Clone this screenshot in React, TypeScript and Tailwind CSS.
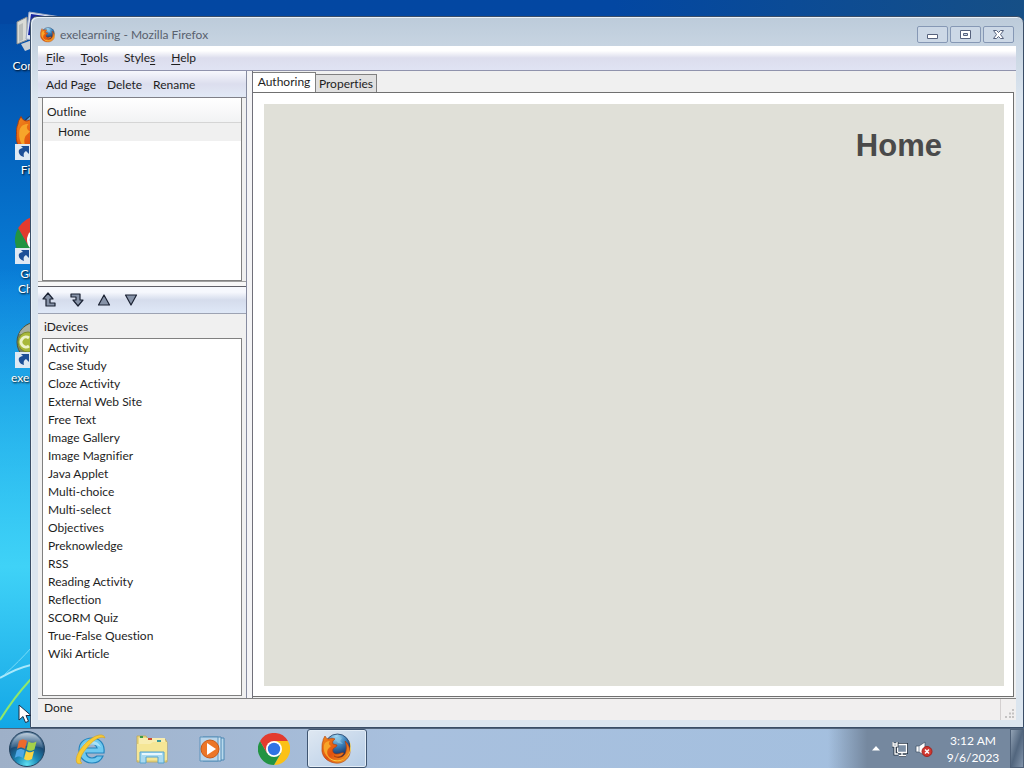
import * as React from 'react';

const MENUS = [
  { before: '', key: 'F', after: 'ile' },
  { before: '', key: 'T', after: 'ools' },
  { before: 'Style', key: 's', after: '' },
  { before: '', key: 'H', after: 'elp' },
];

const PAGE_ACTIONS = ['Add Page', 'Delete', 'Rename'];

const IDEVICES = [
  'Activity',
  'Case Study',
  'Cloze Activity',
  'External Web Site',
  'Free Text',
  'Image Gallery',
  'Image Magnifier',
  'Java Applet',
  'Multi-choice',
  'Multi-select',
  'Objectives',
  'Preknowledge',
  'RSS',
  'Reading Activity',
  'Reflection',
  'SCORM Quiz',
  'True-False Question',
  'Wiki Article',
];

interface IconProps {
  className?: string;
}

function FirefoxIcon({ className }: IconProps) {
  const id = React.useId();
  return (
    <svg viewBox="0 0 32 32" className={className} aria-hidden="true">
      <defs>
        <radialGradient id={`${id}globe`} cx="0.45" cy="0.1" r="0.9">
          <stop offset="0" stopColor="#a4daf4" />
          <stop offset="0.45" stopColor="#3a7fb9" />
          <stop offset="1" stopColor="#0a1444" />
        </radialGradient>
        <linearGradient id={`${id}fox`} x1="0" y1="0" x2="1" y2="1">
          <stop offset="0" stopColor="#f08a1c" />
          <stop offset="0.5" stopColor="#e2510f" />
          <stop offset="1" stopColor="#f6b02c" />
        </linearGradient>
      </defs>
      <circle cx="16.500" cy="13.500" r="12.500" fill={`url(#${id}globe)`} stroke="#1f3c66" strokeWidth="0.8" />
      <path d="M13 3c2 2 5 0 8 2l-2 3 3 3-5-1-3-4z" fill="#8cc6e6" opacity="0.7" />
      <path
        d="M2 8c0-2 1-3 2-5 1 2 2 3 4 3 2-1 4-1 6 0-2 1-3 3-2 5l4 1c0 2-2 2-4 4-1 3 1 5 4 5 3 0 4-2 7-1-2 4-7 5-10 3 5 3 11 1 12-5 1-4 0-7-1-10 5 4 6 11 4 15-3 5-8 8-14 7C6 29 0 23 1 15c0-3 0-5 1-7z"
        fill={`url(#${id}fox)`}
        stroke="#a93a0b"
        strokeWidth="0.6"
      />
      <path d="M28 7c4 8 2 15-5 19-7 3-14 1-18-5 4 8 12 9 18 5s8-11 5-19z" fill="#fbd449" />
      <path d="M3 12c1-3 3-4 6-4-2 2-1 4 1 5l-3 3c-2 4 0 7 2 9-5-2-7-7-6-13z" fill="#f7a52a" />
    </svg>
  );
}

function ChromeIcon({ className }: IconProps) {
  return (
    <svg viewBox="0 0 32 32" className={className} aria-hidden="true">
      <path d="M16 8h13.900A16 16 0 0 1 16 32l7-12z" fill="#fbc116" />
      <path d="M2.100 8L9 20l14 0-7 12A16 16 0 0 1 2.100 8z" fill="#229342" />
      <path d="M2.100 8A16 16 0 0 1 29.900 8H16L9 20z" fill="#e33b2e" />
      <circle cx="16" cy="16" r="8" fill="#fff" />
      <circle cx="16" cy="16" r="6.200" fill="#2f73e4" />
    </svg>
  );
}

function StartOrb() {
  return (
    <svg viewBox="0 0 38 38" className="size-[38px]" aria-hidden="true">
      <defs>
        <radialGradient id="orb" cx="0.5" cy="0.95" r="0.9">
          <stop offset="0" stopColor="#5fe0f2" />
          <stop offset="0.35" stopColor="#1c8bb8" />
          <stop offset="0.7" stopColor="#1b4a74" />
          <stop offset="1" stopColor="#5d7f9f" />
        </radialGradient>
        <linearGradient id="orbGloss" x1="0" y1="0" x2="0" y2="1">
          <stop offset="0" stopColor="#e6eef5" stopOpacity="0.7" />
          <stop offset="1" stopColor="#8aa8c2" stopOpacity="0.2" />
        </linearGradient>
      </defs>
      <circle cx="19" cy="19" r="17.500" fill="url(#orb)" stroke="#24435f" />
      <path d="M3 18C4 8 11 3 19 3s15 5 16 15c-10-3-22-3-32 0z" fill="url(#orbGloss)" />
      <path d="M11 11c3-2 5-2 8 0l-2 8c-3-2-5-2-8 0z" fill="#ec6a2c" />
      <path d="M20.500 11.500c3 2 5 1.500 8 0l-2 8c-3 1.500-5 2-8 0z" fill="#a4d04a" />
      <path d="M8.700 20.500c3-2 5-2 8 0l-2 7.500c-3-2-5-2-8 0z" fill="#4ea7e6" />
      <path d="M18 21c3 2 5 1.500 8 0l-2 8c-3 1.500-5 2-8 0z" fill="#fbd443" />
    </svg>
  );
}

function ExplorerIcon() {
  return (
    <svg viewBox="0 0 32 32" className="size-8" aria-hidden="true">
      <path
        d="M17 5c8 0 13 6 12 15H11c1 4 3 5 6 5 2 0 4-1 5-2h6c-2 5-6 7-11 7C10 30 4 25 4 17 4 10 9 5 17 5zm-6 10h11c-1-3-3-4-5-4-3 0-5 1-6 4z"
        fill="#6fc9f0"
        stroke="#2384bd"
        strokeWidth="1.200"
      />
      <path d="M7 14c2-4 5-6 10-6 4 0 7 2 9 6-5-3-13-3-19 0z" fill="#b9e8fa" opacity="0.8" />
      <path
        d="M30 5c-1-5-9-4-17 3C5 15-1 25 2 30c1 1 3 1 5 0-3-1-2-7 4-14C17 8 25 2 30 5z"
        fill="#f7cb35"
        stroke="#d9a21a"
        strokeWidth="0.6"
      />
    </svg>
  );
}

function FolderIcon() {
  return (
    <svg viewBox="0 0 32 32" className="size-8" aria-hidden="true">
      <path d="M1 29V3h9l2 3h17l2 3v20z" fill="#ead984" stroke="#c0a750" strokeWidth="0.8" />
      <path d="M3 5h26v7H3z" fill="#f8edb0" />
      <path d="M4 3h3v2H4z" fill="#3c9a45" />
      <path d="M12 5h4v2h-4z" fill="#d0492f" />
      <path d="M21 7h4v2h-4z" fill="#3a9a9a" />
      <path d="M1 11h13l3-2h14v18H1z" fill="#f5e695" />
      <path d="M4 19h24v11h-6v-6H10v6H4z" fill="#a9daf0" stroke="#55a4cf" />
      <path d="M6 21h20" stroke="#e7f7fd" strokeWidth="2" />
    </svg>
  );
}

function MediaPlayerIcon() {
  return (
    <svg viewBox="0 0 32 32" className="size-8" aria-hidden="true">
      <path d="M10 5h17v22H10z" fill="#b8d9ec" stroke="#4c88b4" />
      <path d="M6 4h18v24H6z" fill="#cfe5f3" stroke="#4c88b4" />
      <path d="M3 4h18v24H3z" fill="#b9d5ea" stroke="#5d93bb" />
      <circle cx="13" cy="16" r="9" fill="#ec7627" stroke="#c95a17" />
      <path d="M10 10l9 6-9 6z" fill="#fff" />
    </svg>
  );
}

function ComputerIcon() {
  return (
    <svg viewBox="0 0 48 48" className="size-12" aria-hidden="true">
      <path d="M2 14l10-5v23L2 36z" fill="#d9dbd6" stroke="#8b8f90" />
      <path d="M4 17l4-2v17l-4 2z" fill="#b9bdba" />
      <path d="M14 4l32 5v26L11 31z" fill="#dde5f2" stroke="#9fabc6" />
      <path d="M16 6l28 4v20l-31-3z" fill="#1726a0" />
      <path d="M6 36l14-5 8 5-18 7z" fill="#c9cfd4" />
    </svg>
  );
}

function ExeIcon() {
  return (
    <svg viewBox="0 0 48 48" className="size-12" aria-hidden="true">
      <circle cx="22" cy="22" r="20" fill="#77836a" stroke="#4c563f" />
      <path d="M4 14c4-8 12-12 20-11l-8 12z" fill="#a6aea0" />
      <circle cx="13" cy="22" r="10" fill="#a8b83a" stroke="#7d8c2a" />
      <path d="M14 18a5 5 0 1 0 0 8" fill="none" stroke="#eef3c8" strokeWidth="3" />
    </svg>
  );
}

function ShortcutArrow() {
  return (
    <svg viewBox="0 0 16 16" className="absolute bottom-0 left-0 size-4" aria-hidden="true">
      <path d="M0 0h16v16H0z" fill="#dfe9f3" />
      <path d="M6 2h8v8l-3-3c-2 1-3 3-2 6-4-1-6-4-5-7 1-1 2-2 4-2z" fill="#1d4f97" />
    </svg>
  );
}

interface DesktopIconProps {
  label: string;
  shortcut?: boolean;
  children: React.ReactNode;
}

function DesktopIcon({ label, shortcut = true, children }: DesktopIconProps) {
  return (
    <button type="button" className="flex h-[104px] w-full flex-col items-center gap-0.5">
      <span className="relative flex size-12 items-center justify-center">
        {children}
        {shortcut && <ShortcutArrow />}
      </span>
      <span className="w-14 text-center leading-[15px] text-white [text-shadow:1px_1px_2px_#000]">
        {label}
      </span>
    </button>
  );
}

function WindowButton({ label, children }: { label: string; children: React.ReactNode }) {
  return (
    <button
      type="button"
      aria-label={label}
      className="flex h-[17px] w-[31px] items-center justify-center rounded-[2px] border border-[#8698b5] bg-[#ccd8e6]"
    >
      <svg viewBox="0 0 13 11" className="h-[11px] w-[13px]" aria-hidden="true">
        {children}
      </svg>
    </button>
  );
}

function ArrowButton({ label, path }: { label: string; path: string }) {
  return (
    <button type="button" aria-label={label} className="flex size-4 items-center justify-center">
      <svg viewBox="0 0 16 16" className="size-4" aria-hidden="true">
        <path d={path} fill="#8793a8" stroke="#1b2233" strokeWidth="1.2" strokeLinejoin="round" />
      </svg>
    </button>
  );
}

function TaskbarButton({ label, children }: { label: string; children: React.ReactNode }) {
  return (
    <button type="button" aria-label={label} className="flex h-full w-[61px] items-center justify-center">
      {children}
    </button>
  );
}

function Sidebar() {
  return (
    <aside className="flex w-[209px] shrink-0 flex-col border-r border-[#868ba0]">
      <div className="flex h-[27px] shrink-0 items-center gap-[11px] border-b border-[#808088] bg-linear-to-b from-[#f7f8fd] via-[#dcdeee] to-[#e2e9f6] px-2 pt-0.5">
        {PAGE_ACTIONS.map((action) => (
          <button key={action} type="button">
            {action}
          </button>
        ))}
      </div>

      <div className="mx-1 h-[183px] shrink-0 border border-t-0 border-[#808080] bg-white">
        <div className="flex h-[25px] items-center border-b border-[#d5d5d5] bg-linear-to-b from-white to-[#f2f3f4] px-1 pt-1">
          Outline
        </div>
        <button type="button" className="flex h-[18px] w-full items-center bg-[#f0f0f0] px-[15px]">
          Home
        </button>
      </div>

      <div className="h-1.5 shrink-0 border-y border-t-[#a0a0a0] border-b-[#606068] bg-[#f7f7f7]" />

      <div className="flex h-[27px] shrink-0 items-center gap-[11px] border-b border-[#9da3b3] bg-linear-to-b from-[#f6f8fd] from-20% via-[#d5dcec] via-50% to-[#dfe8f7] px-1">
        <ArrowButton label="Promote" path="M6 1l5 6H8v4h5v3H4V7H1z" />
        <ArrowButton label="Demote" path="M2 2h9v6h3l-5 6-5-6h3V5H2z" />
        <ArrowButton label="Move up" path="M8 3l5.500 10h-11z" />
        <ArrowButton label="Move down" path="M8 13l5.500-10h-11z" />
      </div>

      <h2 className="flex h-6 shrink-0 items-center px-1.5 pt-0.5">iDevices</h2>
      <ul className="mx-1 mb-0.5 flex-1 border border-[#808080] bg-white">
        {IDEVICES.map((name) => (
          <li key={name} className="h-[18px]">
            <button type="button" className="flex h-full w-full items-center px-[5px]">
              {name}
            </button>
          </li>
        ))}
      </ul>
    </aside>
  );
}

function AppWindow() {
  return (
    <div className="relative flex flex-1 flex-col rounded-t-[7px] border border-[#3a4d66] bg-[#dbe5ef] bg-linear-to-b from-[#bccbda] to-[#dbe5ef] to-[80px] px-[7px] pb-[7px] shadow-[inset_1px_1px_0_#e9f1f8]">
      <header className="flex h-[29px] shrink-0 items-center px-0.5 pt-1.5">
        <FirefoxIcon className="size-4" />
        <h1 className="flex-1 pl-1 text-[#59616e]">exelearning - Mozilla Firefox</h1>
        <div className="flex gap-0.5">
          <WindowButton label="Minimize">
            <path d="M1.500 5.500h10v4h-10z" fill="#fff" stroke="#56627d" />
          </WindowButton>
          <WindowButton label="Maximize">
            <path d="M1.500 1.500h10v8h-10z" fill="#fff" stroke="#56627d" />
            <path d="M4.500 4.500h4v2h-4z" fill="#ccd8e6" stroke="#56627d" />
          </WindowButton>
          <WindowButton label="Close">
            <path
              d="M1.500 1.500h3l2 2 2-2h3l-3 4 3 4h-3l-2-2-2 2h-3l3-4z"
              fill="#fff"
              stroke="#56627d"
            />
          </WindowButton>
        </div>
      </header>

      <nav className="flex h-[25px] shrink-0 items-center gap-4 border-b border-[#9093ad] bg-linear-to-b from-white from-20% via-[#dcdded] via-50% to-[#e0e3f3] px-2">
        {MENUS.map(({ before, key, after }) => (
          <button key={key} type="button">
            {before}
            <span className="underline underline-offset-2">{key}</span>
            {after}
          </button>
        ))}
      </nav>

      <div className="flex flex-1 bg-[#f0f0f0]">
        <Sidebar />
        <div className="w-[5px] shrink-0 bg-[#f4f4f6]" />
        <main className="flex min-w-0 flex-1 flex-col border-l border-[#70707a]">
          <div role="tablist" className="flex h-[21px] shrink-0 items-end">
            <button
              type="button"
              role="tab"
              aria-selected="true"
              className="h-5 w-[63px] border-t border-r border-[#808080] bg-white pb-0.5"
            >
              Authoring
            </button>
            <button
              type="button"
              role="tab"
              aria-selected="false"
              className="h-[18px] w-[61px] border-t border-r border-[#808080] bg-[#e0e0e0]"
            >
              Properties
            </button>
          </div>
          <div className="mb-px mr-0.5 flex flex-1 border border-l-0 border-[#707070] bg-white pt-[11px] pr-[9px] pb-2.5 pl-[11px]">
            <article className="flex-1 bg-[#e0e0d8] pt-[23px] pr-[62px]">
              <h1 className="text-right font-['Liberation_Sans',Arial,sans-serif] text-[31px] leading-[38px] font-bold text-[#4a4a4a]">
                Home
              </h1>
            </article>
          </div>
        </main>
      </div>

      <footer className="flex h-[22px] shrink-0 items-stretch border-t border-[#808080] bg-[#f1efef]">
        <span className="flex-1 px-1.5 leading-[18px]">Done</span>
        <span className="flex w-4 items-end justify-end border-l border-[#d4d0d0] p-0.5">
          <svg viewBox="0 0 9 9" className="size-[9px]" fill="#c4c2c2" aria-hidden="true">
            <path d="M7 0h2v2H7zM4 3.500h2v2H4zM7 3.500h2v2H7zM0 7h2v2H0zM4 7h2v2H4zM7 7h2v2H7z" />
          </svg>
        </span>
      </footer>
    </div>
  );
}

function Taskbar() {
  return (
    <footer className="flex h-10 shrink-0 items-center border-t border-[#52647b] bg-linear-to-r from-[#9eb0c8] via-[#a8c0de] via-40% to-[#a2bfdf]">
      <button type="button" aria-label="Start" className="flex h-full w-[60px] items-center pl-2">
        <StartOrb />
      </button>
      <TaskbarButton label="Internet Explorer">
        <ExplorerIcon />
      </TaskbarButton>
      <TaskbarButton label="Windows Explorer">
        <FolderIcon />
      </TaskbarButton>
      <TaskbarButton label="Media Player">
        <MediaPlayerIcon />
      </TaskbarButton>
      <TaskbarButton label="Google Chrome">
        <ChromeIcon className="size-8" />
      </TaskbarButton>
      <button
        type="button"
        aria-label="exelearning - Mozilla Firefox"
        className="ml-[3px] flex h-full w-[60px] items-center justify-center rounded-[3px] border border-[#3f5571] bg-linear-to-br from-[#dfe8f2] to-[#b5cce6] shadow-[inset_0_0_0_1px_#e3edf7]"
      >
        <FirefoxIcon className="size-8" />
      </button>

      <div className="ml-auto flex h-full items-center bg-linear-to-r from-transparent to-[#75889f] to-20% pl-9 text-white">
        <button type="button" aria-label="Show hidden icons" className="flex w-6 justify-center">
          <svg viewBox="0 0 8 5" className="h-[5px] w-2" aria-hidden="true">
            <path d="M0 4.500L4 0l4 4.500z" fill="#fff" />
          </svg>
        </button>
        <button type="button" aria-label="Network" className="flex w-6 justify-center">
          <svg viewBox="0 0 16 16" className="size-4" aria-hidden="true">
            <path d="M5.500 3.500h9v8h-9z" fill="#6f8094" stroke="#273545" strokeWidth="3" />
            <path d="M7 14.500h7" stroke="#273545" strokeWidth="3" />
            <path d="M5.500 3.500h9v8h-9z" fill="#7c8fa5" stroke="#fff" strokeWidth="1.300" />
            <path d="M10 12v2M7 14.500h7" stroke="#fff" strokeWidth="1.300" />
            <path d="M1 1v4h4V1M3 5v8h3" fill="none" stroke="#273545" strokeWidth="3" />
            <path d="M1 1v4h4V1M1 3h4M3 5v8h3" fill="none" stroke="#fff" strokeWidth="1.300" />
          </svg>
        </button>
        <button type="button" aria-label="Volume muted" className="flex w-6 justify-center">
          <svg viewBox="0 0 18 16" className="h-4 w-[18px]" aria-hidden="true">
            <path d="M1 5h3l6-4v14l-6-4H1z" fill="#fff" stroke="#47586c" strokeWidth="0.8" />
            <path d="M4 5v6" stroke="#8794a5" />
            <circle cx="12" cy="10.500" r="5" fill="#d0362f" stroke="#a3241f" />
            <path d="M10 8.500l4 4M14 8.500l-4 4" stroke="#fff" strokeWidth="1.500" />
          </svg>
        </button>
        <time className="w-[74px] text-center leading-[17px]">
          3:12 AM
          <br />
          9/6/2023
        </time>
        <button
          type="button"
          aria-label="Show desktop"
          className="h-full w-3.5 border border-[#4e6077] bg-linear-to-br from-[#93a3b5] via-[#52667e] to-[#8496ac]"
        />
      </div>
    </footer>
  );
}

export default function App() {
  return (
    <div className="flex min-h-screen flex-col font-['Lato','Open_Sans',sans-serif] text-[12px] leading-4 text-[#1e1e1e] [font-variant-ligatures:none]">
      <div className="relative flex flex-1 overflow-hidden bg-[#0b85dc] pt-4 pl-[30px]">
        <div className="absolute inset-y-0 left-0 w-[60px] bg-linear-to-b from-[#0347a2] via-[#0a80da] via-40% to-[#18b4ef]" />
        <div className="absolute bottom-0 left-0 h-[460px] w-[30px] bg-linear-to-b from-transparent via-[#3fd2f7] via-65% to-[#11a7e6]" />
        <div className="absolute inset-x-0 top-0 h-6 bg-linear-to-r from-[#0347a2] from-60% to-[#164f86]" />
        <svg viewBox="0 0 31 80" className="absolute bottom-0 left-0 h-20 w-[31px]" fill="none" aria-hidden="true">
          <path d="M0 30c12-7 22-11 31-13" stroke="#a9e8fb" strokeWidth="2" />
          <path d="M4 27C14 18 24 8 31 0" stroke="#7adcf8" />
          <path d="M0 72c8-13 19-28 31-41" stroke="#8fe86b" strokeWidth="2" />
        </svg>

        <div className="absolute top-2 left-0 flex w-[78px] flex-col">
          <DesktopIcon label="Computer" shortcut={false}>
            <ComputerIcon />
          </DesktopIcon>
          <DesktopIcon label="Firefox">
            <FirefoxIcon className="size-12" />
          </DesktopIcon>
          <DesktopIcon label="Google Chrome">
            <ChromeIcon className="size-12" />
          </DesktopIcon>
          <DesktopIcon label="exelearning">
            <ExeIcon />
          </DesktopIcon>
        </div>

        <AppWindow />

        <svg viewBox="0 0 14 20" className="absolute bottom-1 left-[18px] h-5 w-3.5" aria-hidden="true">
          <path
            d="M1 1v15l4-3.500 2.500 6 3-1.200L8 11.500h5z"
            fill="#fff"
            stroke="#1c2c44"
            strokeLinejoin="round"
          />
        </svg>
      </div>
      <Taskbar />
    </div>
  );
}
